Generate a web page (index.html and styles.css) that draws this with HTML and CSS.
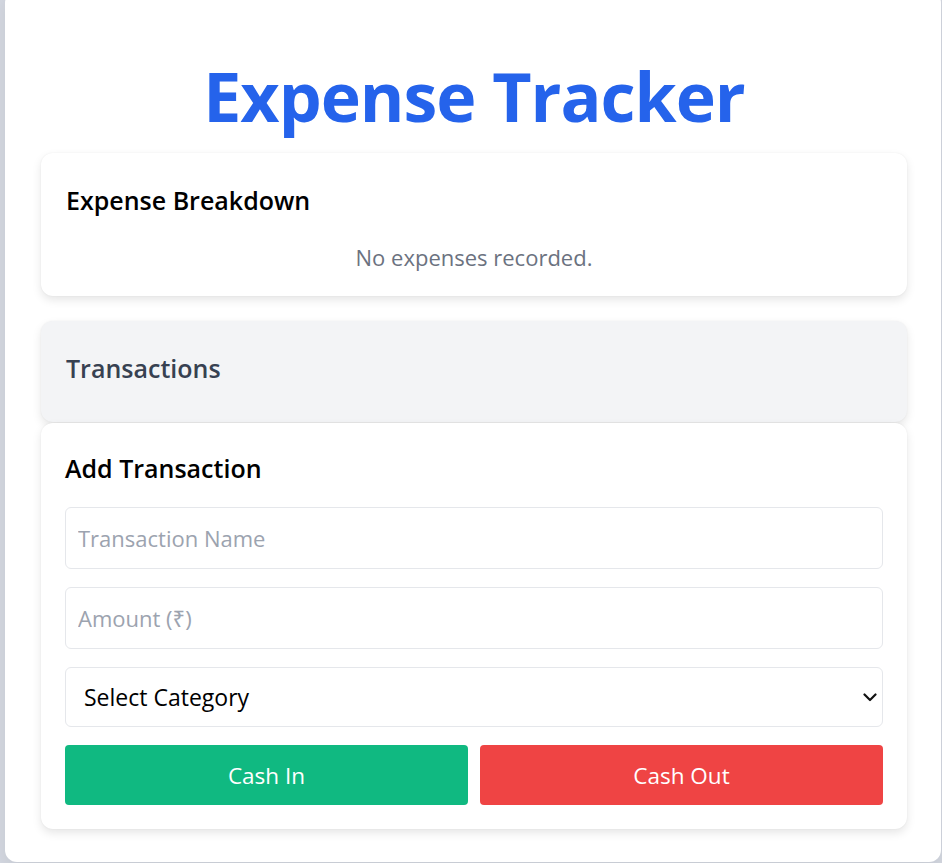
FILE: index.html
```html
<!DOCTYPE html>
<html lang="en">
<head>
<meta charset="utf-8">
<title>Expense Tracker</title>
<link rel="stylesheet" href="styles.css">
</head>
<body>
<main class="app">
  <h1 class="title">Expense Tracker</h1>

  <section class="card breakdown">
    <h2 class="card-heading">Expense Breakdown</h2>
    <p class="empty">No expenses recorded.</p>
  </section>

  <section class="card transactions">
    <h2 class="card-heading muted">Transactions</h2>
  </section>

  <section class="card add">
    <h2 class="card-heading">Add Transaction</h2>
    <form class="form">
      <input class="field" type="text" placeholder="Transaction Name">
      <input class="field" type="text" placeholder="Amount (₹)">
      <div class="select-wrap">
        <select class="field select">
          <option>Select Category</option>
        </select>
        <svg class="chevron" width="14" height="9" viewBox="0 0 14 9" aria-hidden="true">
          <path d="M1.5 1.5 L7 7 L12.5 1.5" fill="none" stroke="#111" stroke-width="2.2" stroke-linecap="round" stroke-linejoin="round"/>
        </svg>
      </div>
      <div class="buttons">
        <button type="button" class="btn btn-in">Cash In</button>
        <button type="button" class="btn btn-out">Cash Out</button>
      </div>
    </form>
  </section>
</main>
</body>
</html>
```

FILE: styles.css
```css
* { box-sizing: border-box; }

html, body {
  margin: 0;
  padding: 0;
}

body {
  background: #d4d8e1;
  font-family: "Open Sans", "Noto Sans", "Liberation Sans", sans-serif;
  height: 863px;
  overflow: hidden;
}

.app {
  margin: -9px 0 0 5px;
  width: 936px;
  background: #ffffff;
  border-radius: 12px;
  box-shadow: 0 6px 18px rgba(0, 0, 0, 0.08);
  padding: 0 34px 33px 36px;
  display: flex;
  flex-direction: column;
}

.title {
  margin: 71px 0 23px;
  font-size: 68px;
  line-height: 68px;
  font-weight: 700;
  color: #2563eb;
  text-align: center;
  letter-spacing: -1px;
}

.card {
  background: #ffffff;
  border-radius: 12px;
  box-shadow: 0 4px 10px rgba(0, 0, 0, 0.10), 0 0 2px rgba(0, 0, 0, 0.06);
  padding: 31px 25px 24px;
}

.card-heading {
  margin: 0;
  font-size: 25px;
  line-height: 32px;
  font-weight: 600;
  color: #000000;
}

.card-heading.muted { color: #374151; }

.empty {
  margin: 26px 0 0;
  text-align: center;
  font-size: 22px;
  line-height: 30px;
  color: #6b7280;
}

.transactions {
  margin-top: 25px;
  background: #f3f4f6;
  padding: 31px 25px 38px;
}

.add {
  margin-top: 1px;
  padding: 29px 24px 24px;
}

.form {
  margin-top: 23px;
  display: flex;
  flex-direction: column;
  gap: 18px;
}

.field {
  width: 100%;
  height: 62px;
  border: 1px solid #e5e7eb;
  border-radius: 6px;
  padding: 0 12px;
  font-family: inherit;
  font-size: 22px;
  color: #111;
  background: #fff;
  outline: none;
}

.field::placeholder { color: #9ca3af; }

.select-wrap { position: relative; }

.select {
  height: 60px;
  appearance: none;
  -webkit-appearance: none;
  padding: 0 18px;
  font-size: 23px;
  color: #000;
}

.chevron {
  position: absolute;
  right: 6px;
  top: 26px;
  pointer-events: none;
}

.buttons {
  display: flex;
  gap: 12px;
}

.btn {
  flex: 1;
  height: 60px;
  border: none;
  border-radius: 4px;
  color: #fff;
  font-family: inherit;
  font-size: 22.5px;
}

.btn-in { background: #10b981; }
.btn-out { background: #ef4444; }
```
